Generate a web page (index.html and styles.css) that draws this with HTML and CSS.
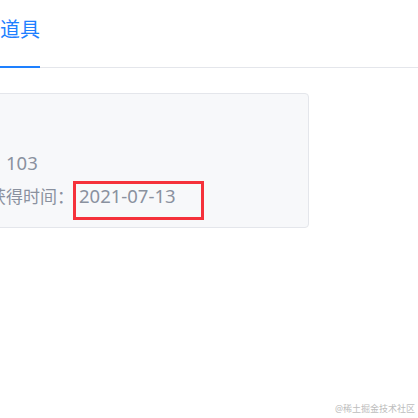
FILE: index.html
```html
<!DOCTYPE html>
<html lang="zh-CN">
<head>
    <meta charset="UTF-8">
    <meta name="viewport" content="width=device-width, initial-scale=1.0">
    <title>我的道具</title>
    <link rel="stylesheet" href="styles.css">
</head>
<body>

    <div class="page">
        <!-- Tabs -->
        <div class="tabs">
            <div class="tab active">道具</div>
        </div>

        <!-- Item card -->
        <div class="item-card">
            <div class="item-row">
                <span class="label">数量：</span><span class="value">103</span>
            </div>
            <div class="item-row">
                <span class="label">首次获得时间：</span><span class="value date">2021-07-13</span>
            </div>
            <span class="mark"></span>
        </div>
    </div>

    <div class="watermark">@稀土掘金技术社区</div>

</body>
</html>
```

FILE: styles.css
```css
body {
    font-family: 'Noto Sans', 'Noto Sans CJK SC', sans-serif;
    background-color: #ffffff;
    margin: 0;
    padding: 0;
    width: 418px;
    height: 418px;
    overflow: hidden;
    position: relative;
}

.page {
    width: 418px;
}

.tabs {
    display: flex;
    height: 67px;
    border-bottom: 1px solid #e4e6eb;
}

.tab {
    font-size: 20px;
    line-height: 28px;
    padding-top: 16px;
    color: #1e80ff;
    box-sizing: border-box;
    height: 68px;
    margin-bottom: -1px;
}

.tab.active {
    border-bottom: 2px solid #1e80ff;
}

.item-card {
    position: relative;
    box-sizing: border-box;
    width: 459px;
    height: 135px;
    margin-top: 25px;
    margin-left: -150px;
    padding: 53px 0 0 104px;
    background-color: #f7f8fa;
    border: 1px solid #e4e6eb;
    border-radius: 4px;
    color: #8a919f;
}

.item-row {
    line-height: 31px;
    white-space: nowrap;
}

.label {
    font-size: 17px;
}

.value {
    font-size: 18.5px;
}

.date {
    margin-left: 5px;
}

/* annotation around the date */
.mark {
    position: absolute;
    top: 87px;
    left: 222px;
    width: 131px;
    height: 39px;
    box-sizing: border-box;
    border: 3px solid #f5313b;
}

.watermark {
    position: absolute;
    right: 3px;
    bottom: 3px;
    font-size: 9px;
    line-height: 12px;
    color: #bdbdbd;
}
```
